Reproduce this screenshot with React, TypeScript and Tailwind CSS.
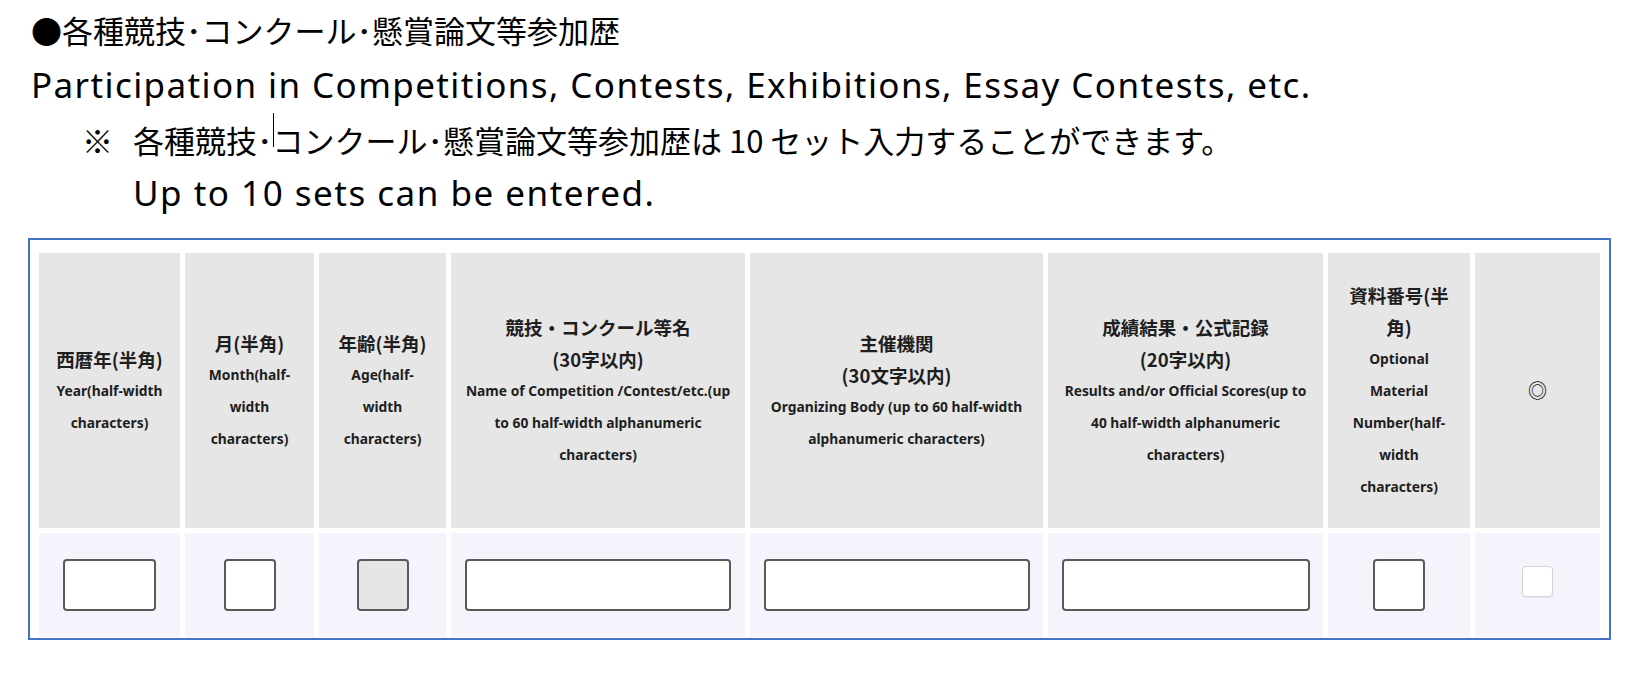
import React from "react";

type Col = {
  jp: string[];
  en: string[];
  input: string;
};

const cols: Col[] = [
  { jp: ["西暦年(半角)"], en: ["Year(half-width", "characters)"], input: "w-[93px] bg-white" },
  { jp: ["月(半角)"], en: ["Month(half-", "width", "characters)"], input: "w-[52px] bg-white" },
  { jp: ["年齢(半角)"], en: ["Age(half-", "width", "characters)"], input: "w-[52px] bg-[#e6e6e6]" },
  {
    jp: ["競技・コンクール等名", "(30字以内)"],
    en: ["Name of Competition /Contest/etc.(up", "to 60 half-width alphanumeric", "characters)"],
    input: "w-[266px] bg-white",
  },
  {
    jp: ["主催機関", "(30文字以内)"],
    en: ["Organizing Body (up to 60 half-width", "alphanumeric characters)"],
    input: "w-[266px] bg-white",
  },
  {
    jp: ["成績結果・公式記録", "(20字以内)"],
    en: ["Results and/or Official Scores(up to", "40 half-width alphanumeric", "characters)"],
    input: "w-[248px] bg-white",
  },
  {
    jp: ["資料番号(半", "角)"],
    en: ["Optional", "Material", "Number(half-", "width", "characters)"],
    input: "w-[52px] bg-white",
  },
];

const jpFont = { fontFamily: '"Noto Sans CJK JP", sans-serif' };

export default function App() {
  return (
    <div className="w-[1639px] h-[679px] bg-white text-black overflow-hidden" style={{ fontFamily: '"Noto Sans", "Noto Sans CJK JP", sans-serif' }}>
      <div className="pt-[3px]">
        <div className="pl-[31px] h-[55px] leading-[53px] text-[31px] whitespace-nowrap" style={jpFont}>
          ●各種競技･コンクール･懸賞論文等参加歴
        </div>
        <div className="pl-[31px] h-[55px] leading-[53px] text-[35px] tracking-[1.4px] whitespace-nowrap">
          Participation in Competitions, Contests, Exhibitions, Essay Contests, etc.
        </div>
        <div className="flex pl-[82px]">
          <div className="w-[51px] h-[53px] leading-[53px] text-[31px]" style={jpFont}>
            ※
          </div>
          <div>
            <div className="h-[53px] leading-[53px] text-[31px] whitespace-nowrap" style={jpFont}>
              各種競技･<span className="relative"><span className="absolute left-0 top-[-4px] w-px h-[34px] bg-black"></span></span>コンクール･懸賞論文等参加歴は 10 セット入力することができます。
            </div>
            <div className="h-[53px] leading-[53px] text-[35px] tracking-[1.5px] whitespace-nowrap">Up to 10 sets can be entered.</div>
          </div>
        </div>
      </div>

      <div className="ml-[28px] mt-[19px] w-[1583px] border-2 border-[#4472c4] pt-[13px] pb-px px-[9px]">
        <div className="grid grid-cols-[141px_129px_127px_294px_293px_275px_142px_125px] gap-[5px]">
          {cols.map((c, i) => (
            <div key={"h" + i} className="bg-[#e6e6e6] h-[275px] flex flex-col items-center justify-center text-center text-[#1e1e1e] font-bold">
              {c.jp.map((t, j) => (
                <div key={j} className="leading-[32px] text-[18.5px] whitespace-nowrap" style={jpFont}>
                  {t}
                </div>
              ))}
              {c.en.map((t, j) => (
                <div key={"e" + j} className="leading-[32px] text-[13.8px] whitespace-nowrap">
                  {t}
                </div>
              ))}
            </div>
          ))}
          <div className="bg-[#e6e6e6] h-[275px] flex items-center justify-center text-[19px] text-[#111] font-medium" style={jpFont}>
            ◎
          </div>

          {cols.map((c, i) => (
            <div key={"b" + i} className="bg-[#f4f4fd] h-[104px] flex items-center justify-center">
              <div className={"h-[52px] rounded-[4px] border-2 border-[#5a5a5a] " + c.input}></div>
            </div>
          ))}
          <div className="bg-[#f4f4fd] h-[104px] flex items-center justify-center">
            <div className="w-[31px] h-[31px] mb-[8px] rounded-[4px] border border-[#d4d4d4] bg-white shadow-[0_1px_1px_rgba(0,0,0,0.06)]"></div>
          </div>
        </div>
      </div>
    </div>
  );
}
